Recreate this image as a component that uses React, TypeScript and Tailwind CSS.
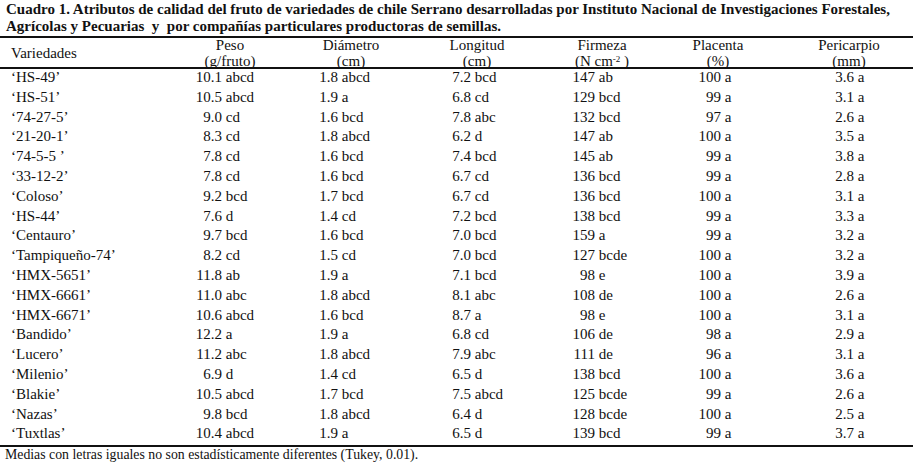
import React from 'react';

// --- Table data ---
type Cell = [string, string];

interface Row {
    name: string;
    cells: Cell[];
}

const ROWS: Row[] = [
    { name: '‘HS-49’', cells: [['10.1', 'abcd'], ['1.8', 'abcd'], ['7.2', 'bcd'], ['147', 'ab'], ['100', 'a'], ['3.6', 'a']] },
    { name: '‘HS-51’', cells: [['10.5', 'abcd'], ['1.9', 'a'], ['6.8', 'cd'], ['129', 'bcd'], ['99', 'a'], ['3.1', 'a']] },
    { name: '‘74-27-5’', cells: [['9.0', 'cd'], ['1.6', 'bcd'], ['7.8', 'abc'], ['132', 'bcd'], ['97', 'a'], ['2.6', 'a']] },
    { name: '‘21-20-1’', cells: [['8.3', 'cd'], ['1.8', 'abcd'], ['6.2', 'd'], ['147', 'ab'], ['100', 'a'], ['3.5', 'a']] },
    { name: '‘74-5-5 ’', cells: [['7.8', 'cd'], ['1.6', 'bcd'], ['7.4', 'bcd'], ['145', 'ab'], ['99', 'a'], ['3.8', 'a']] },
    { name: '‘33-12-2’', cells: [['7.8', 'cd'], ['1.6', 'bcd'], ['6.7', 'cd'], ['136', 'bcd'], ['99', 'a'], ['2.8', 'a']] },
    { name: '‘Coloso’', cells: [['9.2', 'bcd'], ['1.7', 'bcd'], ['6.7', 'cd'], ['136', 'bcd'], ['100', 'a'], ['3.1', 'a']] },
    { name: '‘HS-44’', cells: [['7.6', 'd'], ['1.4', 'cd'], ['7.2', 'bcd'], ['138', 'bcd'], ['99', 'a'], ['3.3', 'a']] },
    { name: '‘Centauro’', cells: [['9.7', 'bcd'], ['1.6', 'bcd'], ['7.0', 'bcd'], ['159', 'a'], ['99', 'a'], ['3.2', 'a']] },
    { name: '‘Tampiqueño-74’', cells: [['8.2', 'cd'], ['1.5', 'cd'], ['7.0', 'bcd'], ['127', 'bcde'], ['100', 'a'], ['3.2', 'a']] },
    { name: '‘HMX-5651’', cells: [['11.8', 'ab'], ['1.9', 'a'], ['7.1', 'bcd'], ['98', 'e'], ['100', 'a'], ['3.9', 'a']] },
    { name: '‘HMX-6661’', cells: [['11.0', 'abc'], ['1.8', 'abcd'], ['8.1', 'abc'], ['108', 'de'], ['100', 'a'], ['2.6', 'a']] },
    { name: '‘HMX-6671’', cells: [['10.6', 'abcd'], ['1.6', 'bcd'], ['8.7', 'a'], ['98', 'e'], ['100', 'a'], ['3.1', 'a']] },
    { name: '‘Bandido’', cells: [['12.2', 'a'], ['1.9', 'a'], ['6.8', 'cd'], ['106', 'de'], ['98', 'a'], ['2.9', 'a']] },
    { name: '‘Lucero’', cells: [['11.2', 'abc'], ['1.8', 'abcd'], ['7.9', 'abc'], ['111', 'de'], ['96', 'a'], ['3.1', 'a']] },
    { name: '‘Milenio’', cells: [['6.9', 'd'], ['1.4', 'cd'], ['6.5', 'd'], ['138', 'bcd'], ['100', 'a'], ['3.6', 'a']] },
    { name: '‘Blakie’', cells: [['10.5', 'abcd'], ['1.7', 'bcd'], ['7.5', 'abcd'], ['125', 'bcde'], ['99', 'a'], ['2.6', 'a']] },
    { name: '‘Nazas’', cells: [['9.8', 'bcd'], ['1.8', 'abcd'], ['6.4', 'd'], ['128', 'bcde'], ['100', 'a'], ['2.5', 'a']] },
    { name: '‘Tuxtlas’', cells: [['10.4', 'abcd'], ['1.9', 'a'], ['6.5', 'd'], ['139', 'bcd'], ['99', 'a'], ['3.7', 'a']] },
];

// number box widths per column (numbers are right-aligned so decimals line up)
const NUM_BOX = ['w-[27px]', 'w-[19px]', 'w-[19px]', 'w-[23px]', 'w-[23px]', 'w-[19px]'];

// name column, then six value columns (each one starts where its number box starts)
const COLS = 'grid grid-cols-[195px_124px_133px_120px_126px_137px_78px]';

const App = () => {
    return (
        <div className="w-[913px] h-[465px] bg-white text-[#111] font-['Liberation_Serif','Times_New_Roman',serif] overflow-hidden">

            {/* ── Caption ── */}
            <div className="pl-[6px] pt-[1px] text-[15px] leading-[17px] font-bold whitespace-nowrap">
                Cuadro 1. Atributos de calidad del fruto de variedades de chile Serrano desarrolladas por Instituto Nacional de Investigaciones Forestales,
                <br />
                Agrícolas y Pecuarias&nbsp; y&nbsp; por compañías particulares productoras de semillas.
            </div>

            {/* ── Table ── */}
            <div className="mt-[1px] border-t-2 border-b-2 border-[#111] text-[15px]">

                {/* header */}
                <div className="flex h-[31px] border-b-2 border-[#111] leading-[16px]">
                    <div className="w-[171px] shrink-0 pl-[11px] self-center">Variedades</div>
                    <div className="w-[118px] shrink-0 flex flex-col items-center -mt-px">
                        <span>Peso</span>
                        <span>(g/fruto)</span>
                    </div>
                    <div className="w-[124px] shrink-0 flex flex-col items-center -mt-px">
                        <span>Diámetro</span>
                        <span>(cm)</span>
                    </div>
                    <div className="w-[128px] shrink-0 flex flex-col items-center -mt-px">
                        <span>Longitud</span>
                        <span>(cm)</span>
                    </div>
                    <div className="w-[122px] shrink-0 flex flex-col items-center -mt-px">
                        <span>Firmeza</span>
                        <span>(N cm<sup className="text-[9px]">-2</sup> )</span>
                    </div>
                    <div className="w-[110px] shrink-0 flex flex-col items-center -mt-px">
                        <span>Placenta</span>
                        <span>(%)</span>
                    </div>
                    <div className="w-[152px] shrink-0 flex flex-col items-center -mt-px">
                        <span>Pericarpio</span>
                        <span>(mm)</span>
                    </div>
                </div>

                {/* body */}
                <div>
                    {ROWS.map(r => (
                        <div key={r.name} className={`${COLS} h-[19.8px] leading-[17px]`}>
                            <div className="pl-[11px] whitespace-pre">{r.name}</div>
                            {r.cells.map((c, i) => (
                                <div key={i} className="whitespace-nowrap">
                                    <span className={`inline-block text-right ${NUM_BOX[i]}`}>{c[0]}</span>
                                    <span> {c[1]}</span>
                                </div>
                            ))}
                        </div>
                    ))}
                </div>
            </div>

            {/* ── Footnote ── */}
            <div className="pl-[5px] text-[13.8px] leading-[16px]">
                Medias con letras iguales no son estadísticamente diferentes (Tukey, 0.01).
            </div>
        </div>
    );
};

export default App;
